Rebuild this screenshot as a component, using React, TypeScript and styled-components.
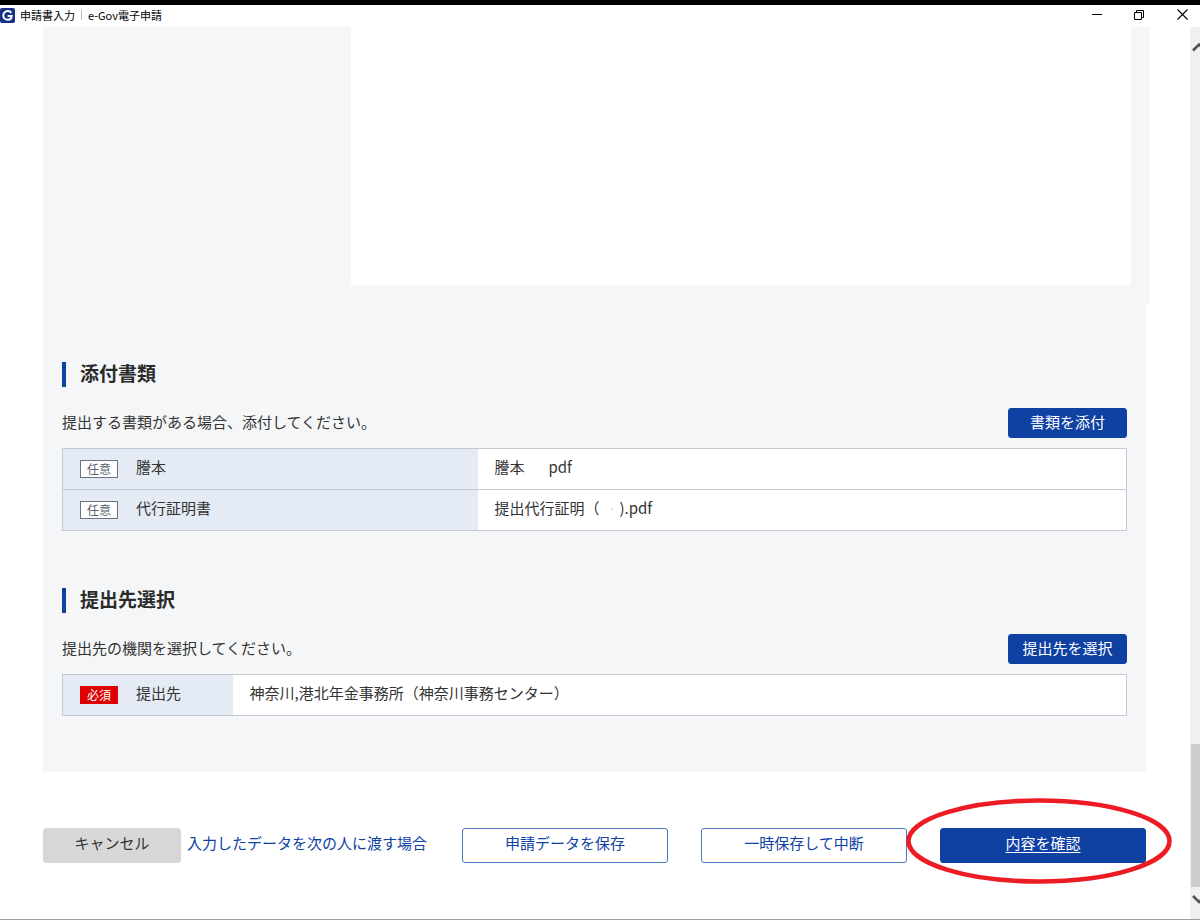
import React from "react";
import styled, { createGlobalStyle } from "styled-components";

const GlobalStyle = createGlobalStyle`
  * { box-sizing: border-box; }
  body {
    margin: 0;
    background: #fff;
    color: #333;
    font-family: "Noto Sans CJK JP", "Noto Sans", sans-serif;
    font-size: 15px;
    line-height: 24px;
  }
  button { font-family: inherit; }
`;

const Window = styled.div`
  display: flex;
  flex-direction: column;
  min-height: 100vh;
  border-top: 5px solid #000;
  border-bottom: 1px solid #a0a0a0;
`;

const TitleBar = styled.header`
  display: flex;
  align-items: center;
  height: 22px;
  padding: 0 12px 2px 0;
  color: #000;
  font-size: 11px;
  line-height: 20px;
`;

const AppIcon = styled.svg`
  width: 15px;
  height: 15px;
  margin-right: 5px;
`;

const TitleDivider = styled.span`
  width: 1px;
  height: 10px;
  margin: 0 6px;
  background: #a9bccb;
`;

const WindowButtons = styled.div`
  display: flex;
  gap: 32px;
  margin-left: auto;
`;

const WindowButton = styled.button`
  display: flex;
  padding: 0;
  border: 0;
  background: none;
  margin-bottom: 2px;
`;

const Body = styled.div`
  display: flex;
  flex: 1;
`;

const Content = styled.main`
  flex: 1;
  padding: 0 44px 56px 43px;
`;

const PreviewArea = styled.section`
  margin-right: -4px;
  padding: 0 19px 19px 308px;
  background: #f4f6f8;
`;

const PreviewSheet = styled.div`
  height: 258px;
  background: #fff;
`;

const Panel = styled.div`
  padding: 58px 19px 56px;
  background: #f4f6f8;
`;

const Section = styled.section`
  & + & {
    margin-top: 57px;
  }
`;

const Heading = styled.h2`
  margin: 0;
  padding: 0 0 3px 14px;
  border-left: 4px solid #0f41a3;
  color: #2a2a2a;
  font-size: 19px;
  line-height: 22px;
`;

const Lead = styled.div`
  display: flex;
  align-items: center;
  justify-content: space-between;
  margin: 21px 0 10px;
`;

const LeadText = styled.p`
  margin: 0 0 2px;
`;

const Button = styled.button<{ $kind: "primary" | "outline" | "muted"; $width: number; $tall?: boolean; $underline?: boolean }>`
  width: ${(p) => p.$width}px;
  height: ${(p) => (p.$tall ? 35 : 30)}px;
  padding: 0 0 ${(p) => (p.$tall ? 5 : 2)}px;
  border: 1px solid ${(p) => ({ primary: "#0f41a3", outline: "#4a76bf", muted: "#d7d7d7" })[p.$kind]};
  border-radius: 3px;
  background: ${(p) => ({ primary: "#0f41a3", outline: "#fff", muted: "#d7d7d7" })[p.$kind]};
  color: ${(p) => ({ primary: "#fff", outline: "#0f41a3", muted: "#333" })[p.$kind]};
  font-size: 15px;
  line-height: 24px;
  text-decoration: ${(p) => (p.$underline ? "underline" : "none")};
  text-underline-offset: 3px;
`;

const Table = styled.table`
  width: 100%;
  border-collapse: collapse;
  table-layout: fixed;
  border: 1px solid #c5c9d6;
  background: #fff;
`;

const Row = styled.tr`
  height: 41px;
  & + & {
    border-top: 1px solid #c5c9d6;
  }
`;

const Label = styled.th<{ $width: number }>`
  width: ${(p) => p.$width}px;
  padding: 0 17px 4px;
  background: #e4ebf5;
  font-weight: 400;
  text-align: left;
`;

const LabelInner = styled.div`
  display: flex;
  align-items: center;
  gap: 18px;
`;

const Value = styled.td`
  padding: 0 17px 4px;
`;

const Badge = styled.span<{ $required?: boolean }>`
  width: 38px;
  margin-top: 4px;
  border: 1px solid ${(p) => (p.$required ? "#df0000" : "#6b7280")};
  background: ${(p) => (p.$required ? "#df0000" : "#fff")};
  color: ${(p) => (p.$required ? "#fff" : "#5b6270")};
  font-size: 12px;
  line-height: 16px;
  text-align: center;
`;

const Blank = styled.span`
  display: inline-block;
  width: 24px;
`;

const FaintMark = styled.span`
  display: inline-block;
  width: 20px;
  padding-left: 11px;
  color: #c9a98d;
  font-size: 8px;
  line-height: 16px;
`;

const Actions = styled.footer`
  display: flex;
  align-items: center;
  gap: 6px;
  margin-top: 56px;
`;

const HandoverLink = styled.a`
  margin-bottom: 5px;
  color: #0f41a3;
  text-decoration: none;
`;

const ActionGroup = styled.div`
  display: flex;
  gap: 33px;
  margin-left: auto;
`;

const ConfirmSpot = styled.div`
  position: relative;
  display: flex;
`;

const RedRing = styled.svg`
  position: absolute;
  left: -35px;
  top: -31px;
  width: 268px;
  height: 88px;
  pointer-events: none;
`;

const ScrollBar = styled.div`
  display: flex;
  flex-direction: column;
  width: 10px;
  padding-left: 1px;
  background: #f0f0f0;
`;

const ScrollArrow = styled.svg`
  width: 9px;
  height: 32px;
`;

const ScrollThumb = styled.div`
  height: 143px;
  margin-top: auto;
  background: #cdcdcd;
`;

export default function App() {
  return (
    <>
      <GlobalStyle />
      <Window>
        <TitleBar>
          <AppIcon viewBox="0 0 15 15" aria-hidden="true">
            <rect width="15" height="15" rx="2" fill="#172f86" />
            <path d="M11.3 4.8C10.4 3.6 9.2 3.1 7.8 3.1C5.2 3.1 3.3 5 3.3 7.5C3.3 10 5.2 11.8 7.7 11.8C10 11.8 11.6 10.3 11.7 7.9H7.6" fill="none" stroke="#fff" strokeWidth="2" />
          </AppIcon>
          <span>申請書入力</span>
          <TitleDivider />
          <span>e-Gov電子申請</span>
          <WindowButtons>
            <WindowButton aria-label="最小化">
              <svg width="11" height="11" viewBox="0 0 11 11"><path d="M1 5.5H11" stroke="#000" /></svg>
            </WindowButton>
            <WindowButton aria-label="元に戻す">
              <svg width="11" height="11" viewBox="0 0 11 11" fill="none" stroke="#000"><path d="M.5 3.5H7.5V10.5H.5ZM2.5 3.5V1.5H9.5V8.5H7.5" /></svg>
            </WindowButton>
            <WindowButton aria-label="閉じる">
              <svg width="11" height="11" viewBox="0 0 11 11"><path d="M.5 .5L10.5 10.5M10.5 .5L.5 10.5" stroke="#000" strokeWidth="1.1" /></svg>
            </WindowButton>
          </WindowButtons>
        </TitleBar>
        <Body>
          <Content>
            <PreviewArea>
              <PreviewSheet />
            </PreviewArea>
            <Panel>
              <Section>
                <Heading>添付書類</Heading>
                <Lead>
                  <LeadText>提出する書類がある場合、添付してください。</LeadText>
                  <Button $kind="primary" $width={119}>書類を添付</Button>
                </Lead>
                <Table>
                  <tbody>
                    <Row>
                      <Label scope="row" $width={415}>
                        <LabelInner><Badge>任意</Badge>謄本</LabelInner>
                      </Label>
                      <Value>謄本<Blank />pdf</Value>
                    </Row>
                    <Row>
                      <Label scope="row" $width={415}>
                        <LabelInner><Badge>任意</Badge>代行証明書</LabelInner>
                      </Label>
                      <Value>提出代行証明（<FaintMark>'</FaintMark>).pdf</Value>
                    </Row>
                  </tbody>
                </Table>
              </Section>
              <Section>
                <Heading>提出先選択</Heading>
                <Lead>
                  <LeadText>提出先の機関を選択してください。</LeadText>
                  <Button $kind="primary" $width={119}>提出先を選択</Button>
                </Lead>
                <Table>
                  <tbody>
                    <Row>
                      <Label scope="row" $width={170}>
                        <LabelInner><Badge $required>必須</Badge>提出先</LabelInner>
                      </Label>
                      <Value>神奈川,港北年金事務所（神奈川事務センター）</Value>
                    </Row>
                  </tbody>
                </Table>
              </Section>
            </Panel>
            <Actions>
              <Button $kind="muted" $width={138} $tall>キャンセル</Button>
              <HandoverLink href="#">入力したデータを次の人に渡す場合</HandoverLink>
              <ActionGroup>
                <Button $kind="outline" $width={206} $tall>申請データを保存</Button>
                <Button $kind="outline" $width={206} $tall>一時保存して中断</Button>
                <ConfirmSpot>
                  <Button $kind="primary" $width={206} $tall $underline>内容を確認</Button>
                  <RedRing viewBox="0 0 268 88" aria-hidden="true">
                    <ellipse cx="134" cy="44" rx="130.5" ry="40.5" fill="none" stroke="#ed1c24" strokeWidth="4.6" />
                  </RedRing>
                </ConfirmSpot>
              </ActionGroup>
            </Actions>
          </Content>
          <ScrollBar aria-hidden="true">
            <ScrollArrow viewBox="0 0 9 32"><path d="M2 23.5L8 17.5L14 23.5" fill="none" stroke="#555" strokeWidth="2.6" /></ScrollArrow>
            <ScrollThumb />
            <ScrollArrow viewBox="0 0 9 32"><path d="M2 9L8 15L14 9" fill="none" stroke="#555" strokeWidth="2.6" /></ScrollArrow>
          </ScrollBar>
        </Body>
      </Window>
    </>
  );
}
